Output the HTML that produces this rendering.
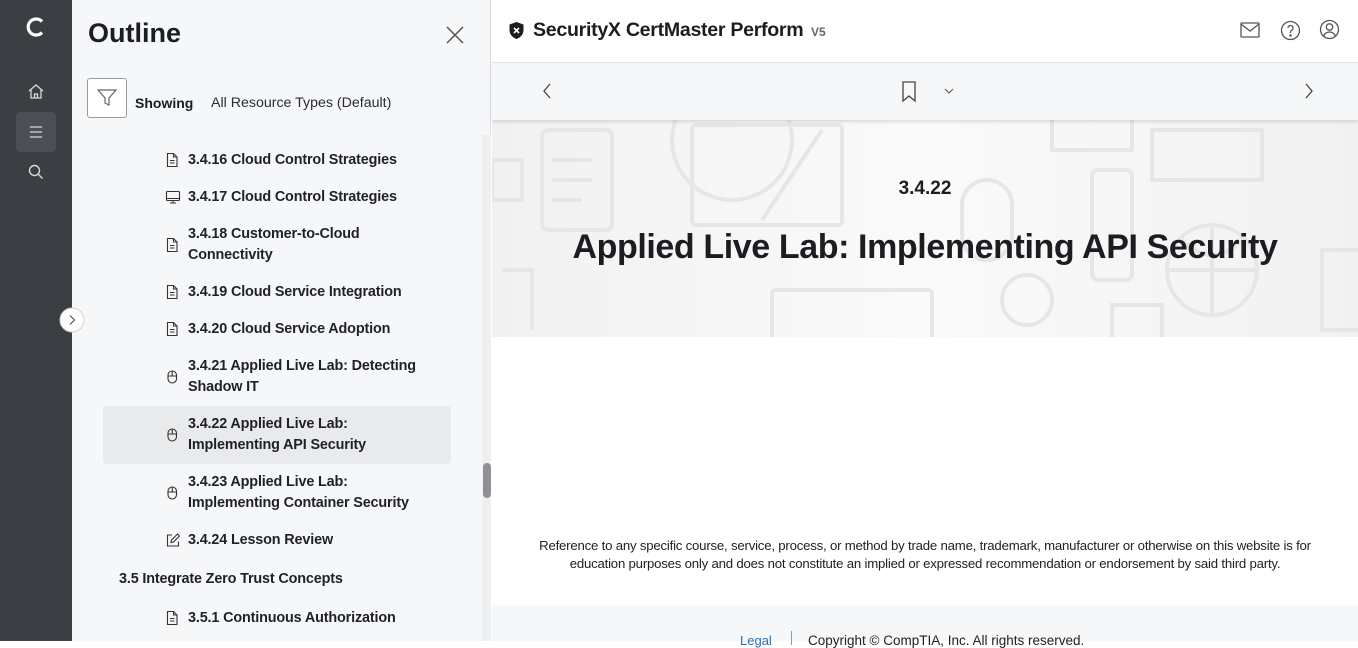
<!DOCTYPE html>
<html><head><meta charset="utf-8">
<style>
*{margin:0;padding:0;box-sizing:border-box}
body{width:1358px;height:641px;overflow:hidden;position:relative;font-family:"Liberation Sans",sans-serif;color:#1b1d21;background:#fff}
.abs{position:absolute}
#rail{left:0;top:0;width:72px;height:641px;background:#3b3e43}
#panel{left:72px;top:0;width:419px;height:641px;background:#f6f7f9;border-right:1px solid #dcdde0}
.it{position:absolute;left:188px;font-size:14.4px;font-weight:bold;line-height:21px;color:#1f2126;letter-spacing:-0.15px}
.ic{position:absolute;left:165px}
#hdr{left:492px;top:0;width:866px;height:62px;background:#fff}
#tb{left:492px;top:62px;width:866px;height:58px;background:#f6f7f8;box-shadow:0 2px 3px rgba(0,0,0,.12);z-index:2;border-top:1px solid #e4e5e7}
#hero{left:492px;top:120px;width:866px;height:217px;background:linear-gradient(90deg,#f1f1f2,#fafafa 50%,#f1f1f2);overflow:hidden}
#foot{left:492px;top:605px;width:866px;height:36px;background:#f6f7f8}
</style></head><body>
<div id="rail" class="abs">
<svg class="abs" style="left:24px;top:15px" width="24" height="24" viewBox="0 0 24 24"><path d="M18 6.5A8 8 0 1 0 18 17.5" fill="none" stroke="#fff" stroke-width="3.2"/></svg>
<svg class="abs" style="left:27px;top:83px" width="18" height="18" viewBox="0 0 18 18" fill="none" stroke="#d8d9db" stroke-width="1.3"><path d="M2 8L9 2l7 6M4 7v8h10V7M7.5 15v-4h3v4"/></svg>
<div class="abs" style="left:16px;top:112px;width:40px;height:40px;background:#4c5056;border-radius:4px"></div>
<svg class="abs" style="left:29px;top:125px" width="14" height="14" viewBox="0 0 14 14" stroke="#d8d9db" stroke-width="1.2"><path d="M1 2h12M1 7h12M1 12h12"/></svg>
<svg class="abs" style="left:28px;top:164px" width="16" height="16" viewBox="0 0 16 16" fill="none" stroke="#d8d9db" stroke-width="1.4"><circle cx="6.5" cy="6.5" r="5"/><path d="M10 10l4.5 4.5"/></svg>
</div>
<div id="panel" class="abs"></div>
<div class="abs" style="left:88px;top:18px;font-size:27px;font-weight:bold;color:#1b1d21">Outline</div>
<svg class="abs" style="left:446px;top:26px" width="18" height="18" viewBox="0 0 18 18" stroke="#555" stroke-width="1.5"><path d="M1 1l16 16M17 1L1 17"/></svg>
<div class="abs" style="left:87px;top:78px;width:40px;height:40px;border:1px solid #9a9ca0;border-radius:3px;background:#fff"></div>
<svg class="abs" style="left:97px;top:89px" width="20" height="18" viewBox="0 0 20 18" fill="none" stroke="#666" stroke-width="1.2"><path d="M1 1h18l-7 8v7l-4-2V9z"/></svg>
<div class="abs" style="left:135px;top:95px;font-size:14px;font-weight:bold">Showing</div>
<div class="abs" style="left:211px;top:95px;font-size:14.2px;color:#2a2c30">All Resource Types (Default)</div>
<div class="abs" style="left:103px;top:406px;width:348px;height:58px;background:#e9eaec;border-radius:4px"></div>
<div class="abs" style="left:482px;top:135px;width:9px;height:506px;background:#eeeff0"></div>
<div class="abs" style="left:483px;top:463px;width:8px;height:35px;background:#8f9194;border-radius:4px"></div>

<svg width="0" height="0" style="position:absolute"><defs>
<g id="doc" fill="none" stroke="#333" stroke-width="1.1"><path d="M2.5 1.5h6l3.5 3.5v9.5h-9.5z M8.5 1.5v3.5h3.5 M5 8.5h4.5M5 11h4.5"/></g>
<g id="mouse" fill="none" stroke="#333" stroke-width="1.1"><rect x="3" y="2" width="8.5" height="12" rx="4.2"/><path d="M3 7h8.5M7.25 2v5"/></g>
</defs></svg>

<svg class="ic" style="top:152px" width="15" height="16"><use href="#doc"/></svg>
<div class="it" style="top:150px">3.4.16 Cloud Control Strategies</div>
<svg class="ic" style="top:189px" width="16" height="16" viewBox="0 0 16 16" fill="none" stroke="#333" stroke-width="1.1"><rect x="1.5" y="2.5" width="13" height="9" rx="1"/><path d="M1.5 9.5h13M5 14h6M8 11.5v2.5"/></svg>
<div class="it" style="top:187px">3.4.17 Cloud Control Strategies</div>
<svg class="ic" style="top:237px" width="15" height="16"><use href="#doc"/></svg>
<div class="it" style="top:224px">3.4.18 Customer-to-Cloud<br>Connectivity</div>
<svg class="ic" style="top:284px" width="15" height="16"><use href="#doc"/></svg>
<div class="it" style="top:282px">3.4.19 Cloud Service Integration</div>
<svg class="ic" style="top:321px" width="15" height="16"><use href="#doc"/></svg>
<div class="it" style="top:319px">3.4.20 Cloud Service Adoption</div>
<svg class="ic" style="top:369px" width="15" height="16"><use href="#mouse"/></svg>
<div class="it" style="top:356px">3.4.21 Applied Live Lab: Detecting<br>Shadow IT</div>
<svg class="ic" style="top:427px" width="15" height="16"><use href="#mouse"/></svg>
<div class="it" style="top:414px">3.4.22 Applied Live Lab:<br>Implementing API Security</div>
<svg class="ic" style="top:485px" width="15" height="16"><use href="#mouse"/></svg>
<div class="it" style="top:472px">3.4.23 Applied Live Lab:<br>Implementing Container Security</div>
<svg class="ic" style="top:532px" width="16" height="16" viewBox="0 0 16 16" fill="none" stroke="#333" stroke-width="1.1"><path d="M7 3H2.5v11h11V9.5M6 10.5l.5-2.5 6-6 2 2-6 6z"/></svg>
<div class="it" style="top:530px">3.4.24 Lesson Review</div>
<div class="it" style="top:569px;left:119px">3.5 Integrate Zero Trust Concepts</div>
<svg class="ic" style="top:610px" width="15" height="16"><use href="#doc"/></svg>
<div class="it" style="top:608px">3.5.1 Continuous Authorization</div>

<svg class="abs" style="left:57px;top:305px" width="30" height="30" viewBox="0 0 30 30"><circle cx="15" cy="15" r="12" fill="#fff" stroke="#d0d1d4"/><path d="M13 10.5l4.5 4.5-4.5 4.5" fill="none" stroke="#555" stroke-width="1.2"/></svg>

<div id="hdr" class="abs"></div>
<svg class="abs" style="left:508px;top:21px" width="17" height="19" viewBox="0 0 17 19"><path d="M8.5 1L15.5 3.5V9c0 4.5-3 7.5-7 9-4-1.5-7-4.5-7-9V3.5z" fill="#1b1d21"/><path d="M6 7l5 5M11 7l-5 5" stroke="#fff" stroke-width="1.6"/></svg>
<div class="abs" style="left:533px;top:19px;font-size:19.6px;font-weight:bold;letter-spacing:-0.3px">SecurityX CertMaster Perform</div>
<div class="abs" style="left:811px;top:25px;font-size:12px;color:#666;font-weight:bold">V5</div>
<svg class="abs" style="left:1240px;top:21px" width="20" height="18" viewBox="0 0 20 18" fill="none" stroke="#555" stroke-width="1.3"><rect x="1" y="2" width="18" height="14" rx="1"/><path d="M1 3l9 7 9-7"/></svg>
<svg class="abs" style="left:1280px;top:20px" width="21" height="21" viewBox="0 0 21 21" fill="none" stroke="#555" stroke-width="1.3"><circle cx="10.5" cy="10.5" r="9"/><path d="M8 8a2.5 2.5 0 1 1 3.5 2.3c-.7.4-1 .9-1 1.7v1"/><circle cx="10.5" cy="15.5" r=".6" fill="#555"/></svg>
<svg class="abs" style="left:1319px;top:19px" width="21" height="21" viewBox="0 0 21 21" fill="none" stroke="#555" stroke-width="1.3"><circle cx="10.5" cy="10.5" r="9"/><circle cx="10.5" cy="8" r="3.2"/><path d="M4.5 17c1.5-3 3.5-4 6-4s4.5 1 6 4"/></svg>

<div id="tb" class="abs">
<svg class="abs" style="left:50px;top:20px" width="10" height="16" viewBox="0 0 10 16" fill="none" stroke="#444" stroke-width="1.3"><path d="M8 1L2 8l6 7"/></svg>
<svg class="abs" style="left:409px;top:18px" width="16" height="22" viewBox="0 0 16 22" fill="none" stroke="#444" stroke-width="1.3"><path d="M2 1h12v19l-6-5-6 5z"/></svg>
<svg class="abs" style="left:452px;top:25px" width="10" height="7" viewBox="0 0 10 7" fill="none" stroke="#555" stroke-width="1.1"><path d="M1 1l4 4 4-4"/></svg>
<svg class="abs" style="left:812px;top:20px" width="10" height="16" viewBox="0 0 10 16" fill="none" stroke="#444" stroke-width="1.3"><path d="M2 1l6 7-6 7"/></svg>
</div>

<div id="hero" class="abs">
<svg width="866" height="217" fill="none" stroke="#e6e6e7" stroke-width="4">
<rect x="50" y="10" width="70" height="100" rx="6"/><path d="M60 40h40M60 60h40M60 80h30"/>
<circle cx="240" cy="20" r="60"/>
<rect x="200" y="5" width="150" height="100" rx="4"/><path d="M330 10l-60 90"/>
<rect x="0" y="40" width="30" height="40"/>
<rect x="560" y="-10" width="80" height="40"/>
<rect x="600" y="50" width="40" height="110" rx="6"/>
<rect x="660" y="10" width="110" height="50"/>
<circle cx="720" cy="150" r="45"/><path d="M675 150h90M720 105v90M690 120q30 30 60 0"/>
<rect x="280" y="170" width="160" height="60" rx="4"/>
<circle cx="535" cy="180" r="25"/>
<rect x="620" y="185" width="50" height="40"/>
<rect x="830" y="130" width="40" height="80"/>
<path d="M10 150h30v60"/>
<rect x="470" y="60" width="50" height="80" rx="25"/>
</svg>
</div>
<div class="abs" style="left:492px;top:178px;width:866px;text-align:center;font-size:19px;font-weight:bold">3.4.22</div>
<div class="abs" style="left:492px;top:228px;width:866px;text-align:center;font-size:34px;font-weight:bold;letter-spacing:-0.4px">Applied Live Lab: Implementing API Security</div>

<div class="abs" style="left:492px;top:537px;width:866px;text-align:center;font-size:13.2px;line-height:18px;color:#222;letter-spacing:-0.2px;white-space:nowrap">Reference to any specific course, service, process, or method by trade name, trademark, manufacturer or otherwise on this website is for<br>education purposes only and does not constitute an implied or expressed recommendation or endorsement by said third party.</div>
<div id="foot" class="abs">
<div class="abs" style="left:248px;top:28px;font-size:13px;color:#2b6cb0">Legal</div>
<div class="abs" style="left:299px;top:26px;width:1px;height:14px;background:#999"></div>
<div class="abs" style="left:316px;top:28px;font-size:13.5px;color:#222">Copyright © CompTIA, Inc. All rights reserved.</div>
</div>
</body></html>
